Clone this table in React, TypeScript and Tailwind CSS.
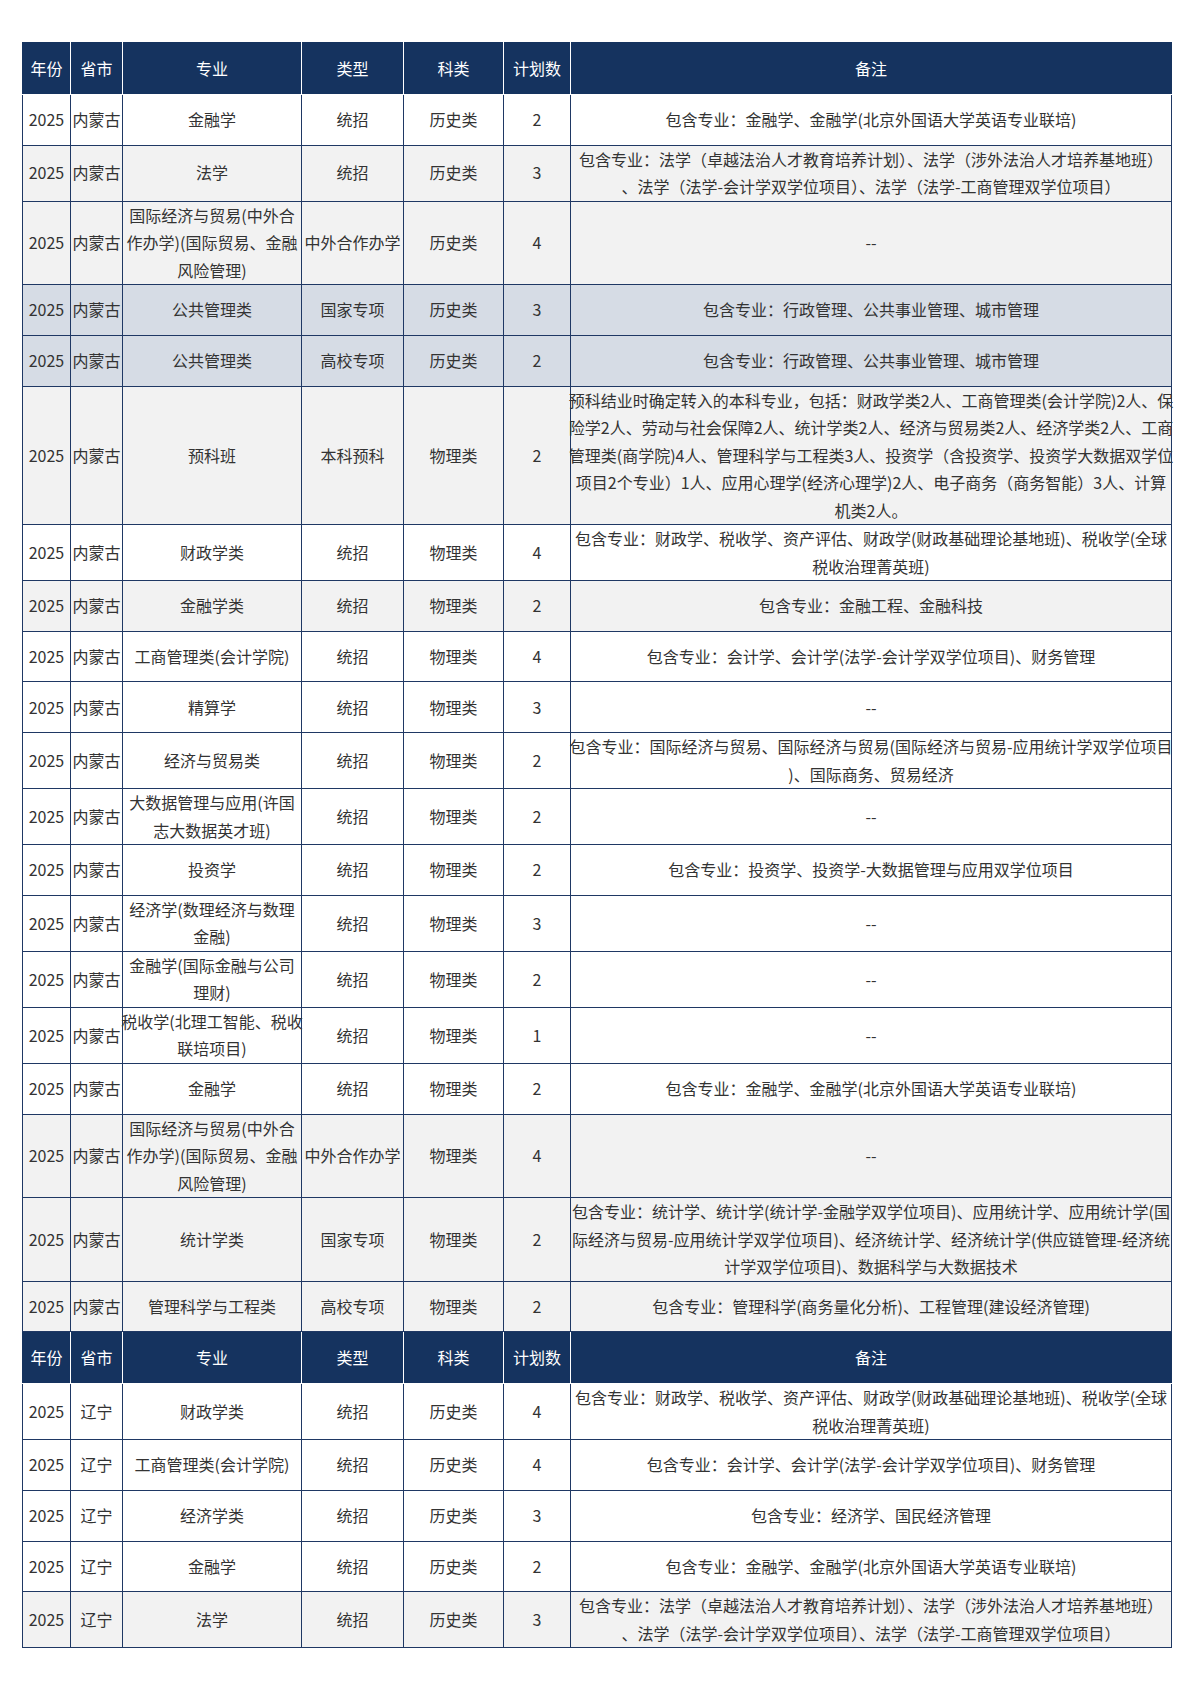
import React from 'react';

type Row = {
  prov: string;
  major: string[];
  type: string;
  cat: string;
  n: string;
  note: string[];
  bg: 'white' | 'gray' | 'blue';
};

const DASH = ['--'];
const JINRONG = ['包含专业：金融学、金融学(北京外国语大学英语专业联培)'];
const FAXUE = [
  '包含专业：法学（卓越法治人才教育培养计划）、法学（涉外法治人才培养基地班）',
  '、法学（法学-会计学双学位项目）、法学（法学-工商管理双学位项目）',
];
const CAIZHENG = [
  '包含专业：财政学、税收学、资产评估、财政学(财政基础理论基地班)、税收学(全球',
  '税收治理菁英班)',
];
const GONGGUAN = ['包含专业：会计学、会计学(法学-会计学双学位项目)、财务管理'];
const GUOJI = ['国际经济与贸易(中外合', '作办学)(国际贸易、金融', '风险管理)'];
const GONGGONG = ['包含专业：行政管理、公共事业管理、城市管理'];

const nmg: Row[] = [
  { prov: '内蒙古', major: ['金融学'], type: '统招', cat: '历史类', n: '2', note: JINRONG, bg: 'white' },
  { prov: '内蒙古', major: ['法学'], type: '统招', cat: '历史类', n: '3', note: FAXUE, bg: 'gray' },
  { prov: '内蒙古', major: GUOJI, type: '中外合作办学', cat: '历史类', n: '4', note: DASH, bg: 'gray' },
  { prov: '内蒙古', major: ['公共管理类'], type: '国家专项', cat: '历史类', n: '3', note: GONGGONG, bg: 'blue' },
  { prov: '内蒙古', major: ['公共管理类'], type: '高校专项', cat: '历史类', n: '2', note: GONGGONG, bg: 'blue' },
  {
    prov: '内蒙古',
    major: ['预科班'],
    type: '本科预科',
    cat: '物理类',
    n: '2',
    note: [
      '预科结业时确定转入的本科专业，包括：财政学类2人、工商管理类(会计学院)2人、保',
      '险学2人、劳动与社会保障2人、统计学类2人、经济与贸易类2人、经济学类2人、工商',
      '管理类(商学院)4人、管理科学与工程类3人、投资学（含投资学、投资学大数据双学位',
      '项目2个专业）1人、应用心理学(经济心理学)2人、电子商务（商务智能）3人、计算',
      '机类2人。',
    ],
    bg: 'gray',
  },
  { prov: '内蒙古', major: ['财政学类'], type: '统招', cat: '物理类', n: '4', note: CAIZHENG, bg: 'white' },
  { prov: '内蒙古', major: ['金融学类'], type: '统招', cat: '物理类', n: '2', note: ['包含专业：金融工程、金融科技'], bg: 'gray' },
  { prov: '内蒙古', major: ['工商管理类(会计学院)'], type: '统招', cat: '物理类', n: '4', note: GONGGUAN, bg: 'white' },
  { prov: '内蒙古', major: ['精算学'], type: '统招', cat: '物理类', n: '3', note: DASH, bg: 'white' },
  {
    prov: '内蒙古',
    major: ['经济与贸易类'],
    type: '统招',
    cat: '物理类',
    n: '2',
    note: [
      '包含专业：国际经济与贸易、国际经济与贸易(国际经济与贸易-应用统计学双学位项目',
      ')、国际商务、贸易经济',
    ],
    bg: 'white',
  },
  { prov: '内蒙古', major: ['大数据管理与应用(许国', '志大数据英才班)'], type: '统招', cat: '物理类', n: '2', note: DASH, bg: 'white' },
  { prov: '内蒙古', major: ['投资学'], type: '统招', cat: '物理类', n: '2', note: ['包含专业：投资学、投资学-大数据管理与应用双学位项目'], bg: 'white' },
  { prov: '内蒙古', major: ['经济学(数理经济与数理', '金融)'], type: '统招', cat: '物理类', n: '3', note: DASH, bg: 'white' },
  { prov: '内蒙古', major: ['金融学(国际金融与公司', '理财)'], type: '统招', cat: '物理类', n: '2', note: DASH, bg: 'white' },
  { prov: '内蒙古', major: ['税收学(北理工智能、税收', '联培项目)'], type: '统招', cat: '物理类', n: '1', note: DASH, bg: 'white' },
  { prov: '内蒙古', major: ['金融学'], type: '统招', cat: '物理类', n: '2', note: JINRONG, bg: 'white' },
  { prov: '内蒙古', major: GUOJI, type: '中外合作办学', cat: '物理类', n: '4', note: DASH, bg: 'gray' },
  {
    prov: '内蒙古',
    major: ['统计学类'],
    type: '国家专项',
    cat: '物理类',
    n: '2',
    note: [
      '包含专业：统计学、统计学(统计学-金融学双学位项目)、应用统计学、应用统计学(国',
      '际经济与贸易-应用统计学双学位项目)、经济统计学、经济统计学(供应链管理-经济统',
      '计学双学位项目)、数据科学与大数据技术',
    ],
    bg: 'gray',
  },
  {
    prov: '内蒙古',
    major: ['管理科学与工程类'],
    type: '高校专项',
    cat: '物理类',
    n: '2',
    note: ['包含专业：管理科学(商务量化分析)、工程管理(建设经济管理)'],
    bg: 'gray',
  },
];

const ln: Row[] = [
  { prov: '辽宁', major: ['财政学类'], type: '统招', cat: '历史类', n: '4', note: CAIZHENG, bg: 'white' },
  { prov: '辽宁', major: ['工商管理类(会计学院)'], type: '统招', cat: '历史类', n: '4', note: GONGGUAN, bg: 'white' },
  { prov: '辽宁', major: ['经济学类'], type: '统招', cat: '历史类', n: '3', note: ['包含专业：经济学、国民经济管理'], bg: 'white' },
  { prov: '辽宁', major: ['金融学'], type: '统招', cat: '历史类', n: '2', note: JINRONG, bg: 'white' },
  { prov: '辽宁', major: ['法学'], type: '统招', cat: '历史类', n: '3', note: FAXUE, bg: 'gray' },
];

const heads = ['年份', '省市', '专业', '类型', '科类', '计划数', '备注'];

const bgClass = {
  white: 'bg-white',
  gray: 'bg-[#f2f2f2]',
  blue: 'bg-[#d6dce5]',
};

// one line per entry, overflow spreads to both sides like the source
function Lines({ lines }: { lines: string[] }) {
  return (
    <div className="flex flex-col items-center">
      {lines.map((l, i) => (
        <span key={i} className="whitespace-nowrap">
          {l}
        </span>
      ))}
    </div>
  );
}

function HeadRow() {
  return (
    <tr className="h-[52px] bg-[#15335f] text-white">
      {heads.map((h, i) => (
        <th
          key={h}
          className={`border border-white border-t-[#15335f] p-0 font-normal ${
            i === 0 ? 'border-l-[#15335f]' : ''
          } ${i === heads.length - 1 ? 'border-r-[#15335f]' : ''}`}
        >
          {h}
        </th>
      ))}
    </tr>
  );
}

function BodyRow({ r }: { r: Row }) {
  const td = 'border border-[#1f3864] p-0 align-middle';
  return (
    <tr className={`h-[50.7px] ${bgClass[r.bg]}`}>
      <td className={td}>
        <Lines lines={['2025']} />
      </td>
      <td className={td}>
        <Lines lines={[r.prov]} />
      </td>
      <td className={td}>
        <Lines lines={r.major} />
      </td>
      <td className={td}>
        <Lines lines={[r.type]} />
      </td>
      <td className={td}>
        <Lines lines={[r.cat]} />
      </td>
      <td className={td}>
        <Lines lines={[r.n]} />
      </td>
      <td className={td}>
        <Lines lines={r.note} />
      </td>
    </tr>
  );
}

export default function App() {
  return (
    <div
      className="min-h-[1683px] bg-white pt-[42px] pl-[22px] text-[16px] leading-[27.5px] text-[#333]"
      style={{ fontFamily: '"Microsoft YaHei", "Noto Sans CJK SC", "Noto Sans", sans-serif' }}
    >
      <table className="w-[1149px] table-fixed border-collapse text-center">
        <colgroup>
          <col className="w-[48px]" />
          <col className="w-[52px]" />
          <col className="w-[179px]" />
          <col className="w-[102px]" />
          <col className="w-[100px]" />
          <col className="w-[67px]" />
          <col className="w-[601px]" />
        </colgroup>
        <tbody>
          <HeadRow />
          {nmg.map((r, i) => (
            <BodyRow key={'n' + i} r={r} />
          ))}
          <HeadRow />
          {ln.map((r, i) => (
            <BodyRow key={'l' + i} r={r} />
          ))}
        </tbody>
      </table>
    </div>
  );
}
